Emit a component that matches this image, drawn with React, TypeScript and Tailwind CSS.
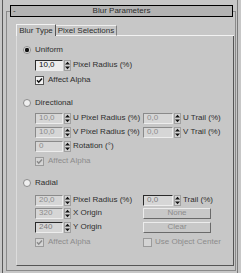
import React from 'react'

type Tone = 'on' | 'dim' | 'mid'

function Spin() {
  return (
    <svg width="7" height="11" viewBox="0 0 7 11" className="shrink-0">
      <rect x="0.5" y="0.5" width="6" height="10" fill="#d2d2d2" stroke="#a0a0a0" />
      <path d="M3.5 1.8 L6 4.6 L1 4.6Z" fill="#111" />
      <path d="M1 6.4 L6 6.4 L3.5 9.2Z" fill="#111" />
    </svg>
  )
}

function Field({ value, w = 28, tone = 'dim' }: { value: string; w?: number; tone?: Tone }) {
  const edge = tone === 'on' ? 'border-t-[#2a2a2a] border-l-[#2a2a2a] bg-[#ececec] text-[#111]'
    : tone === 'mid' ? 'border-t-[#2a2a2a] border-l-[#2a2a2a] bg-[#d6d6d6] text-[#7c7c7c]'
    : 'border-t-[#8a8a8a] border-l-[#8a8a8a] bg-[#d6d6d6] text-[#8c8c8c]'
  return (
    <div
      style={{ width: w }}
      className={`h-[11px] shrink-0 border border-b-[#ededed] border-r-[#ededed] pl-[3px] flex items-center leading-none ${edge}`}
    >
      {value}
    </div>
  )
}

function Radio({ on }: { on?: boolean }) {
  return (
    <svg width="8" height="8" viewBox="0 0 8 8" className="shrink-0">
      <circle cx="4" cy="4" r="3.5" fill="#efefef" stroke="#8a8a8a" />
      {on && <circle cx="4" cy="4" r="2.2" fill="#111" />}
    </svg>
  )
}

function Check({ on, dim }: { on?: boolean; dim?: boolean }) {
  return (
    <svg width="9" height="9" viewBox="0 0 9 9" className="shrink-0">
      <rect x="0.5" y="0.5" width="8" height="8" fill={dim ? '#d4d4d4' : '#f2f2f2'} stroke={dim ? '#9a9a9a' : '#555'} />
      {on && <path d="M2 4.3 L3.7 6.2 L7 2.4" fill="none" stroke={dim ? '#8a8a8a' : '#111'} strokeWidth="1.5" />}
    </svg>
  )
}

function SpinGroup({ value, label, tone, w, wide }: { value: string; label: string; tone?: Tone; w?: number; wide?: boolean }) {
  return (
    <div className={`flex items-center ${wide ? 'w-[108px]' : ''}`}>
      <Field value={value} tone={tone} w={w} />
      <div className="ml-[1px]"><Spin /></div>
      <span className="ml-[2px] whitespace-nowrap">{label}</span>
    </div>
  )
}

function Btn({ label }: { label: string }) {
  return (
    <div className="w-[68px] h-[11px] border border-t-[#ececec] border-l-[#ececec] border-b-[#6a6a6a] border-r-[#6a6a6a] bg-[#c8c8c8] flex items-center justify-center text-[#8c8c8c] leading-none">
      {label}
    </div>
  )
}

export default function App() {
  return (
    <div className="w-[241px] h-[273px] bg-[#c7c7c7] overflow-hidden font-['Liberation_Sans',Arial,sans-serif] text-[8px] text-[#2e2e2e]">
      <div className="ml-[2px] w-[236px] h-[273px] border-l border-r border-l-[#5a5a5a] border-r-[#7a7a7a] pt-[11px]">
        <div className="ml-[3px] mr-[1px] h-[260px] border border-[#8a8a8a]">
          {/* title */}
          <div className="-mt-[7px] ml-[3px] mr-[2px] h-[12px] border border-black bg-[#b3b3b3] relative flex items-center justify-center leading-none">
            <span className="absolute left-[2px] top-[1px]">-</span>
            <span>Blur Parameters</span>
          </div>

          {/* tabs */}
          <div className="mt-[7px] ml-[9px] mr-[1px] flex items-end h-[12px]">
            <div className="w-[40px] h-[12px] border-t border-l border-r border-t-[#f2f2f2] border-l-[#f2f2f2] border-r-[#555] flex items-center justify-center leading-none">
              Blur Type
            </div>
            <div className="w-[61px] h-[11px] border-t border-r border-b border-t-[#eeeeee] border-r-[#808080] border-b-[#f2f2f2] flex items-center justify-center leading-none">
              Pixel Selections
            </div>
            <div className="flex-1 h-[11px] border-b border-[#f2f2f2]" />
          </div>

          {/* pane */}
          <div className="ml-[9px] mr-[1px] h-[230px] border-l border-r border-b border-l-[#dcdcdc] border-r-[#555] border-b-[#555] flex flex-col">
            <div className="mt-[8px] ml-[6px] h-[12px] flex items-center gap-[4px]">
              <Radio on />
              <span>Uniform</span>
            </div>
            <div className="mt-[3px] ml-[18px] h-[12px] flex items-center">
              <SpinGroup value="10,0" label="Pixel Radius (%)" tone="on" />
            </div>
            <div className="mt-[3px] ml-[18px] h-[12px] flex items-center gap-[4px]">
              <Check on />
              <span>Affect Alpha</span>
            </div>

            <div className="mt-[11px] ml-[6px] h-[12px] flex items-center gap-[4px]">
              <Radio />
              <span>Directional</span>
            </div>
            <div className="mt-[3px] ml-[18px] h-[12px] flex items-center">
              <SpinGroup value="10,0" label="U Pixel Radius (%)" wide />
              <SpinGroup value="0,0" label="U Trail (%)" w={30} />
            </div>
            <div className="mt-[2px] ml-[18px] h-[12px] flex items-center">
              <SpinGroup value="10,0" label="V Pixel Radius (%)" wide />
              <SpinGroup value="0,0" label="V Trail (%)" w={30} />
            </div>
            <div className="mt-[2px] ml-[18px] h-[12px] flex items-center">
              <SpinGroup value="0" label="Rotation (°)" />
            </div>
            <div className="mt-[3px] ml-[18px] h-[12px] flex items-center gap-[4px] text-[#8c8c8c]">
              <Check on dim />
              <span>Affect Alpha</span>
            </div>

            <div className="mt-[10px] ml-[6px] h-[12px] flex items-center gap-[4px]">
              <Radio />
              <span>Radial</span>
            </div>
            <div className="mt-[5px] ml-[18px] h-[12px] flex items-center">
              <SpinGroup value="20,0" label="Pixel Radius (%)" wide />
              <SpinGroup value="0,0" label="Trail (%)" tone="mid" w={30} />
            </div>
            <div className="mt-[1px] ml-[18px] h-[12px] flex items-center">
              <SpinGroup value="320" label="X Origin" wide />
              <Btn label="None" />
            </div>
            <div className="mt-[2px] ml-[18px] h-[12px] flex items-center">
              <SpinGroup value="240" label="Y Origin" tone="mid" wide />
              <Btn label="Clear" />
            </div>
            <div className="mt-[3px] ml-[18px] h-[12px] flex items-center text-[#8c8c8c]">
              <div className="w-[108px] flex items-center gap-[4px]">
                <Check on dim />
                <span>Affect Alpha</span>
              </div>
              <div className="flex items-center gap-[3px]">
                <Check dim />
                <span>Use Object Center</span>
              </div>
            </div>
          </div>
        </div>
      </div>
    </div>
  )
}
